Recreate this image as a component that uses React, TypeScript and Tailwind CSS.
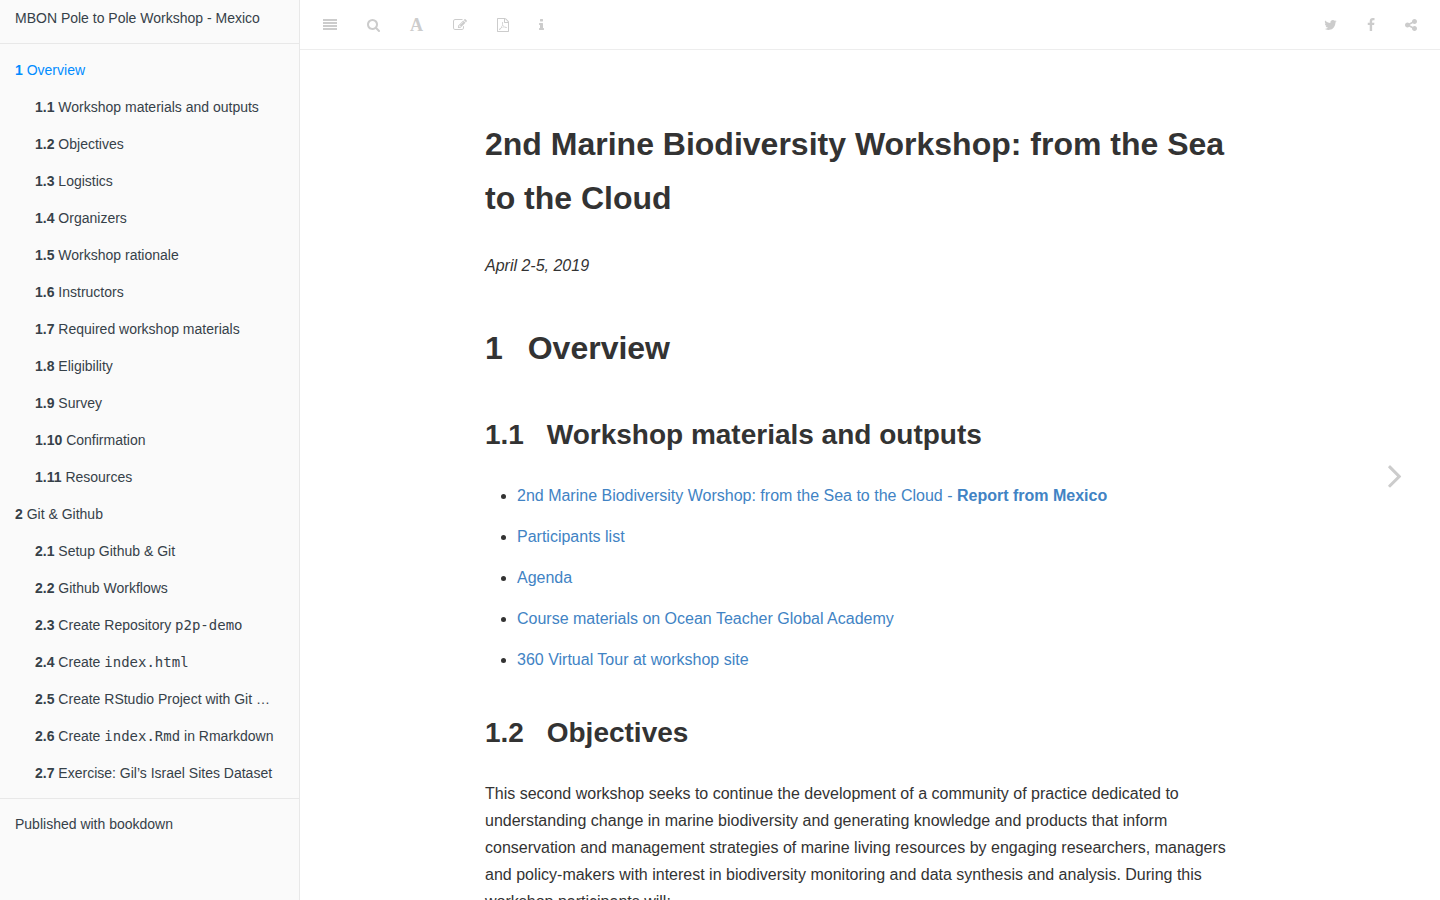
import type { ReactNode } from "react";

type Chapter = { num: string; title: ReactNode; nested?: boolean; active?: boolean };

const chapters: Chapter[] = [
  { num: "1", title: "Overview", active: true },
  { num: "1.1", title: "Workshop materials and outputs", nested: true },
  { num: "1.2", title: "Objectives", nested: true },
  { num: "1.3", title: "Logistics", nested: true },
  { num: "1.4", title: "Organizers", nested: true },
  { num: "1.5", title: "Workshop rationale", nested: true },
  { num: "1.6", title: "Instructors", nested: true },
  { num: "1.7", title: "Required workshop materials", nested: true },
  { num: "1.8", title: "Eligibility", nested: true },
  { num: "1.9", title: "Survey", nested: true },
  { num: "1.10", title: "Confirmation", nested: true },
  { num: "1.11", title: "Resources", nested: true },
  { num: "2", title: "Git & Github" },
  { num: "2.1", title: "Setup Github & Git", nested: true },
  { num: "2.2", title: "Github Workflows", nested: true },
  { num: "2.3", title: <>Create Repository <Code>p2p-demo</Code></>, nested: true },
  { num: "2.4", title: <>Create <Code>index.html</Code></>, nested: true },
  { num: "2.5", title: "Create RStudio Project with Git …", nested: true },
  { num: "2.6", title: <>Create <Code>index.Rmd</Code> in Rmarkdown</>, nested: true },
  { num: "2.7", title: "Exercise: Gil’s Israel Sites Dataset", nested: true },
];

const materials: ReactNode[] = [
  <>
    2nd Marine Biodiversity Worshop: from the Sea to the Cloud - <strong>Report from Mexico</strong>
  </>,
  "Participants list",
  "Agenda",
  "Course materials on Ocean Teacher Global Academy",
  "360 Virtual Tour at workshop site",
];

const icons = {
  search:
    "M1216 832q0-185-131.5-316.5t-316.5-131.5-316.5 131.5-131.5 316.5 131.5 316.5 316.5 131.5 316.5-131.5 131.5-316.5zm512 832q0 52-38 90t-90 38q-54 0-90-38l-343-342q-179 124-399 124-143 0-273.5-55.5t-225-150-150-225-55.5-273.5 55.5-273.5 150-225 225-150 273.5-55.5 273.5 55.5 225 150 150 225 55.5 273.5q0 220-124 399l343 343q37 37 37 90z",
  menu: "M0 0h14v2h-14zM0 3h14v2h-14zM0 6h14v2h-14zM0 9h14v2h-14z",
  edit: "M888 1184l116-116-152-152-116 116v56h96v96h56zm440-720q-16-16-33 1l-350 350q-17 17-1 33t33-1l350-350q17-17 1-33zm80 594v190q0 119-84.5 203.5t-203.5 84.5h-832q-119 0-203.5-84.5t-84.5-203.5v-832q0-119 84.5-203.5t203.5-84.5h832q63 0 117 25 15 7 18 23 3 17-9 29l-49 49q-14 14-32 8-23-6-45-6h-832q-66 0-113 47t-47 113v832q0 66 47 113t113 47h832q66 0 113-47t47-113v-126q0-13 9-22l64-64q15-15 35-7t20 29zm-96-738l288 288-672 672h-288v-288zm444 132l-92 92-288-288 92-92q28-28 68-28t68 28l152 152q28 28 28 68t-28 68z",
  pdf: "M1596 380q28 28 48 76t20 88v1152q0 40-28 68t-68 28h-1344q-40 0-68-28t-28-68v-1600q0-40 28-68t68-28h896q40 0 88 20t76 48zm-444-244v376h376q-10-29-22-41l-313-313q-12-12-41-22zm384 1528v-1024h-416q-40 0-68-28t-28-68v-416h-768v1536h1280zm-514-593q33 26 84 56 59-7 117-7 147 0 177 49 16 22 2 52 0 1-1 2l-2 2v1q-6 38-71 38-48 0-115-20t-130-53q-221 24-392 83-153 262-242 262-15 0-28-7l-24-12q-1-1-6-5-10-10-6-36 9-40 56-91.5t132-96.5q14-9 23 6 2 2 2 4 52-85 107-197 68-136 104-262-24-82-30.5-159.5t6.5-127.5q11-40 42-40h22q23 0 35 15 18 21 9 68-2 6-4 8 1 3 1 8v30q-2 123-14 192 55 164 146 238zm-576 411q52-24 137-158-51 40-87.5 84t-49.5 74zm398-920q-15 42-2 132 1-7 7-44 0-3 7-43 1-4 4-8-1-1-1-2t-1-2-1-3q-1-22-13-36 0 1-1 2zm-124 661q135-54 284-81-2-1-13-9.5t-16-13.5q-76-67-127-176-27 86-83 197-30 56-45 83zm646-16q-24-24-140-24 76 28 124 28 14 0 18-1 0-1-2-3z",
  info: "M1216 1344v128q0 26-19 45t-45 19h-512q-26 0-45-19t-19-45v-128q0-26 19-45t45-19h64v-384h-64q-26 0-45-19t-19-45v-128q0-26 19-45t45-19h384q26 0 45 19t19 45v576h64q26 0 45 19t19 45zm-128-1152v192q0 26-19 45t-45 19h-256q-26 0-45-19t-19-45v-192q0-26 19-45t45-19h256q26 0 45 19t19 45z",
  twitter:
    "M1684 408q-67 98-162 167 1 14 1 42 0 130-38 259.5t-115.5 248.5-184.5 210.5-258 146-323 54.5q-271 0-496-145 35 4 78 4 225 0 401-138-105-2-188-64.5t-114-159.5q33 5 61 5 43 0 85-11-112-23-185.5-111.5t-73.5-205.5v-4q68 38 146 41-66-44-105-115t-39-154q0-88 44-163 121 149 294.5 238.5t371.5 99.5q-8-38-8-74 0-134 94.5-228.5t228.5-94.5q140 0 236 102 109-21 205-78-37 115-142 178 93-10 186-50z",
  facebook:
    "M1343 12v264h-157q-86 0-116 36t-30 108v189h293l-39 296h-254v759h-306v-759h-255v-296h255v-218q0-186 104-288.5t277-102.5q147 0 228 12z",
  share:
    "M1344 1024q133 0 226.5 93.5t93.5 226.5-93.5 226.5-226.5 93.5-226.5-93.5-93.5-226.5q0-12 2-34l-360-180q-92 86-218 86-133 0-226.5-93.5t-93.5-226.5 93.5-226.5 226.5-93.5q126 0 218 86l360-180q-2-22-2-34 0-133 93.5-226.5t226.5-93.5 226.5 93.5 93.5 226.5-93.5 226.5-226.5 93.5q-126 0-218-86l-360 180q2 22 2 34t-2 34l360 180q92-86 218-86z",
  next: "M1171 960q0 13-10 23l-466 466q-10 10-23 10t-23-10l-50-50q-10-10-10-23t10-23l393-393-393-393q-10-10-10-23t10-23l50-50q10-10 23-10t23 10l466 466q10 10 10 23z",
};

function Code({ children }: { children: ReactNode }) {
  return <code className="font-['DejaVu_Sans_Mono',monospace] text-sm leading-none">{children}</code>;
}

function Icon({
  name,
  viewBox,
  className,
}: {
  name: keyof typeof icons;
  viewBox: string;
  className: string;
}) {
  return (
    <svg viewBox={viewBox} className={className} fill="currentColor" aria-hidden>
      <path d={icons[name]} />
    </svg>
  );
}

function ToolbarButton({ label, children }: { label: string; children: ReactNode }) {
  return (
    <button
      type="button"
      aria-label={label}
      className="flex h-full cursor-pointer items-center px-[15px] pt-px hover:text-[#444]"
    >
      {children}
    </button>
  );
}

function Sidebar() {
  return (
    <aside className="w-[300px] shrink-0 overflow-y-auto border-r border-black/7 bg-[#fafafa] text-sm text-[#364149]">
      <nav aria-label="Table of contents">
        <a href="#top" className="block border-b border-black/7 px-[15px] pt-2.5 pb-4 leading-[17px]">
          MBON Pole to Pole Workshop - Mexico
        </a>
        <ul className="pt-2 pb-1.5">
          {chapters.map((c) => (
            <li key={c.num} className={c.nested ? "pl-5" : ""}>
              <a
                href={`#${c.num}`}
                className={`block h-[37px] truncate px-[15px] py-2.5 leading-[17px] hover:underline ${
                  c.active ? "text-[#008cff]" : ""
                }`}
              >
                <b>{c.num}</b> {c.title}
              </a>
            </li>
          ))}
        </ul>
        <a
          href="#bookdown"
          className="block border-t border-black/7 px-[15px] py-[17px] leading-[17px]"
        >
          Published with bookdown
        </a>
      </nav>
    </aside>
  );
}

function Toolbar() {
  return (
    <header className="flex h-[50px] shrink-0 justify-between border-b border-black/7 px-2 text-[#ccc]">
      <div className="flex">
        <ToolbarButton label="Toggle sidebar">
          <Icon name="menu" viewBox="0 0 14 12" className="h-3 w-3.5" />
        </ToolbarButton>
        <ToolbarButton label="Search">
          <Icon name="search" viewBox="64 0 1664 1792" className="h-3.5 w-[13px]" />
        </ToolbarButton>
        <ToolbarButton label="Font settings">
          <span className="w-[13px] text-center font-['Liberation_Serif',serif] text-lg leading-none font-bold">
            A
          </span>
        </ToolbarButton>
        <ToolbarButton label="Edit">
          <Icon name="edit" viewBox="0 0 1792 1792" className="h-3.5 w-3.5" />
        </ToolbarButton>
        <ToolbarButton label="Download">
          <Icon name="pdf" viewBox="128 0 1536 1792" className="h-3.5 w-3" />
        </ToolbarButton>
        <ToolbarButton label="Information">
          <Icon name="info" viewBox="576 0 640 1792" className="h-3.5 w-[5px]" />
        </ToolbarButton>
      </div>
      <div className="flex">
        <ToolbarButton label="Twitter">
          <Icon name="twitter" viewBox="64 0 1664 1792" className="h-3.5 w-[13px]" />
        </ToolbarButton>
        <ToolbarButton label="Facebook">
          <Icon name="facebook" viewBox="384 0 1024 1792" className="h-3.5 w-2" />
        </ToolbarButton>
        <ToolbarButton label="Share">
          <Icon name="share" viewBox="128 0 1536 1792" className="h-3.5 w-3" />
        </ToolbarButton>
      </div>
    </header>
  );
}

function Heading({ num, children }: { num: string; children: ReactNode }) {
  return (
    <h2 className="text-[28px] leading-[48px] font-bold">
      <span className="mr-[15px]">{num}</span> {children}
    </h2>
  );
}

export default function App() {
  return (
    <div className="flex h-screen bg-white font-['Liberation_Sans',Arial,sans-serif] text-[#333]">
      <Sidebar />
      <div className="relative flex min-w-0 flex-1 flex-col">
        <Toolbar />
        <main id="top" className="flex-1 overflow-y-auto">
          <article className="mx-auto max-w-[800px] px-[15px] pt-[67px] pb-10 text-base leading-[27px]">
            <h1 className="text-[32px] leading-[54px] font-bold">
              2nd Marine Biodiversity Workshop: from the Sea to the Cloud
            </h1>
            <p className="mt-[27px] italic">April 2-5, 2019</p>
            <h1 className="mt-[42px] mb-9 text-[32px] leading-[54px] font-bold">
              <span className="mr-4">1</span> Overview
            </h1>
            <Heading num="1.1">Workshop materials and outputs</Heading>
            <ul className="mt-[23px] mb-9 list-disc space-y-3.5 pl-8">
              {materials.map((m, i) => (
                <li key={i}>
                  <a href="#materials" className="text-[#4183c4] hover:underline">
                    {m}
                  </a>
                </li>
              ))}
            </ul>
            <Heading num="1.2">Objectives</Heading>
            <p className="mt-[23px]">
              This second workshop seeks to continue the development of a community of practice dedicated to
              understanding change in marine biodiversity and generating knowledge and products that inform
              conservation and management strategies of marine living resources by engaging researchers, managers
              and policy-makers with interest in biodiversity monitoring and data synthesis and analysis. During this
              workshop participants will:
            </p>
          </article>
        </main>
        <a
          href="#next"
          aria-label="Next page"
          className="absolute top-[50px] right-0 bottom-0 flex w-[90px] items-center justify-center text-[#ccc] hover:text-[#444]"
        >
          <Icon name="next" viewBox="0 0 1792 1792" className="h-10 w-10" />
        </a>
      </div>
    </div>
  );
}
